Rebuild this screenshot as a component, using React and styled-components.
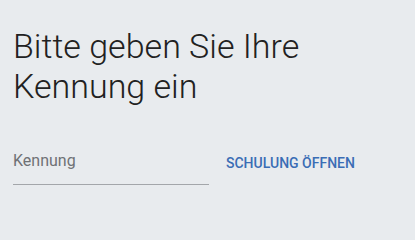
import styled, { createGlobalStyle } from 'styled-components';

const GlobalStyle = createGlobalStyle`
    body {
        margin: 0;
        background: #e8ebee;
        font-family: Roboto, "Liberation Sans", sans-serif;
    }
`;

//
const Page = styled.main({
    padding: '26px 13px 0',
});

//
const Title = styled.h1({
    margin: 0,
    fontSize: '34px',
    lineHeight: '40px',
    fontWeight: 300,
    color: '#212121',
});

//
const FormRow = styled.form({
    display: 'flex',
    alignItems: 'flex-end',
    gap: '9px',
    marginTop: '39px',
});

//
const Field = styled.label({
    display: 'block',
    width: '196px',
    'input': {
        display: 'block',
        width: '100%',
        boxSizing: 'border-box',
        margin: 0,
        padding: '0 0 14px',
        border: 0,
        borderBottom: '1px solid #a3a6aa',
        background: 'transparent',
        fontFamily: 'inherit',
        fontSize: '16px',
        lineHeight: '19px',
        color: '#212121',
        outline: 'none',
        '&::placeholder': {
            color: '#6f7175',
            opacity: 1,
        },
    },
});

//
const TextButton = styled.button({
    height: '36px',
    marginBottom: '4px',
    padding: '0 8px',
    border: 0,
    background: 'transparent',
    fontFamily: 'inherit',
    fontSize: '14px',
    fontWeight: 500,
    lineHeight: '36px',
    letterSpacing: 0,
    textTransform: 'uppercase',
    color: '#3a6db5',
    cursor: 'pointer',
});

//
const App = () => (

    <>
        <GlobalStyle />
        <Page>
            <Title>Bitte geben Sie Ihre Kennung ein</Title>
            <FormRow onSubmit={(e) => e.preventDefault()}>
                <Field>
                    <input type="text" name="kennung" placeholder="Kennung" />
                </Field>
                <TextButton type="submit">Schulung öffnen</TextButton>
            </FormRow>
        </Page>
    </>

);

export default App;
